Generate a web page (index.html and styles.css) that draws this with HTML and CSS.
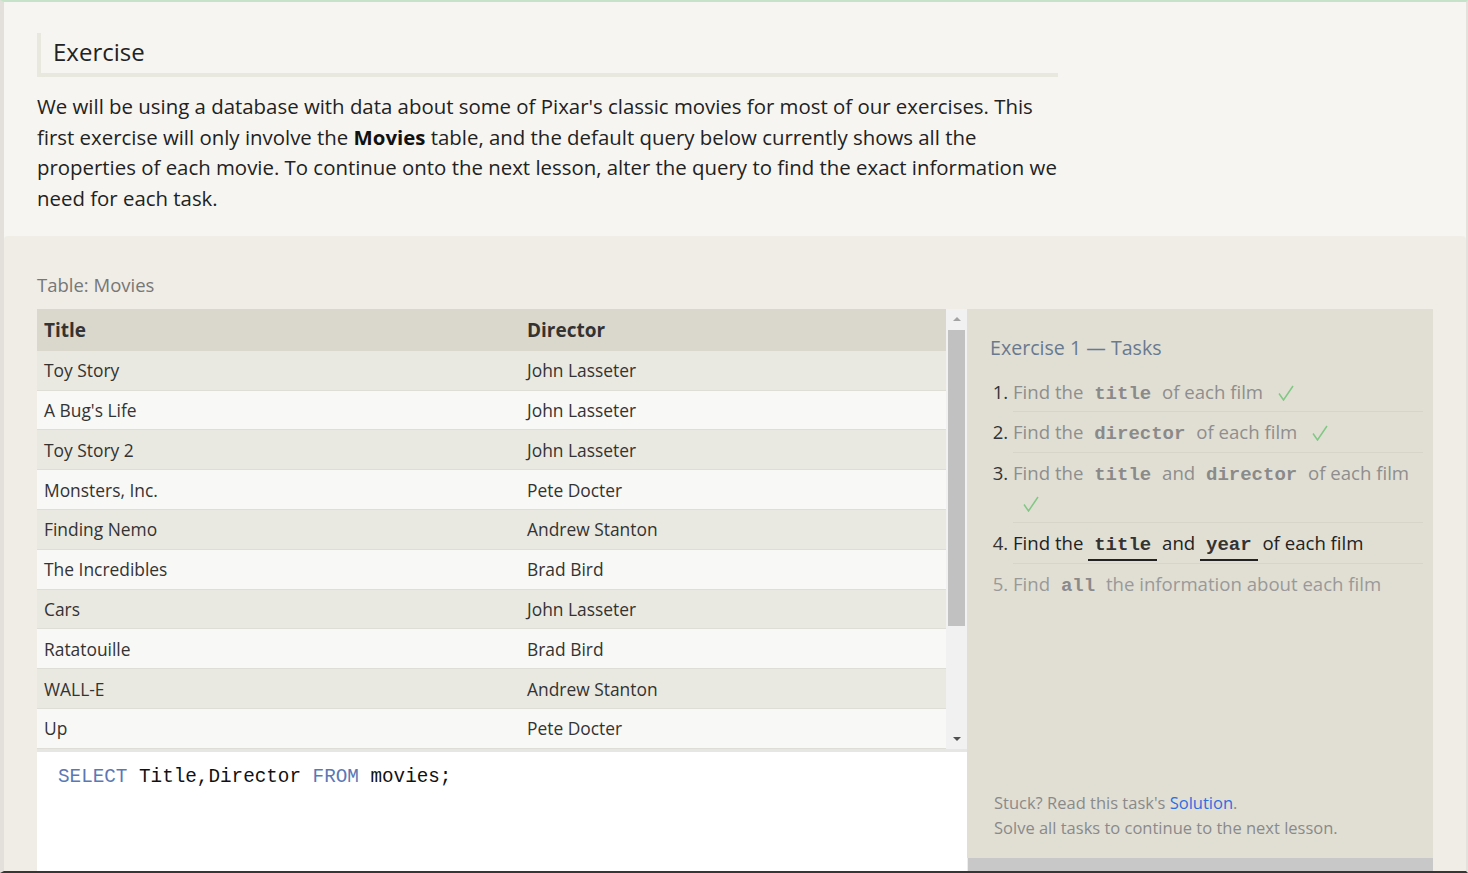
FILE: index.html
```html
<!DOCTYPE html>
<html lang="en">
<head>
<meta charset="utf-8">
<title>SQL Lesson</title>
<link rel="stylesheet" href="styles.css">
</head>
<body>
<div class="window">
  <section class="intro">
    <h1 class="intro-title">Exercise</h1>
    <p class="intro-text">We will be using a database with data about some of Pixar's classic movies for most of our exercises. This first exercise will only involve the <strong>Movies</strong> table, and the default query below currently shows all the properties of each movie. To continue onto the next lesson, alter the query to find the exact information we need for each task.</p>
  </section>
  <section class="workspace">
    <div class="table-label">Table: Movies</div>
    <div class="workspace-body">
      <div class="left-col">
        <div class="results">
          <div class="results-view">
            <table class="results-table">
              <thead>
                <tr><th class="col-title">Title</th><th>Director</th></tr>
              </thead>
              <tbody>
                <tr><td>Toy Story</td><td>John Lasseter</td></tr>
                <tr><td>A Bug's Life</td><td>John Lasseter</td></tr>
                <tr><td>Toy Story 2</td><td>John Lasseter</td></tr>
                <tr><td>Monsters, Inc.</td><td>Pete Docter</td></tr>
                <tr><td>Finding Nemo</td><td>Andrew Stanton</td></tr>
                <tr><td>The Incredibles</td><td>Brad Bird</td></tr>
                <tr><td>Cars</td><td>John Lasseter</td></tr>
                <tr><td>Ratatouille</td><td>Brad Bird</td></tr>
                <tr><td>WALL-E</td><td>Andrew Stanton</td></tr>
                <tr><td>Up</td><td>Pete Docter</td></tr>
              </tbody>
            </table>
          </div>
          <div class="scrollbar">
            <div class="sb-btn"><span class="sb-arrow sb-arrow-up"></span></div>
            <div class="sb-track"><div class="sb-thumb"></div></div>
            <div class="sb-btn"><span class="sb-arrow sb-arrow-down"></span></div>
          </div>
        </div>
        <div class="editor"><code><span class="kw">SELECT</span> Title,Director <span class="kw">FROM</span> movies;</code></div>
      </div>
      <div class="right-col">
        <div class="tasks">
          <h2 class="tasks-title">Exercise 1 — Tasks</h2>
          <ol class="task-list">
            <li class="task done">Find the <code>title</code> of each film <svg class="check" viewBox="0 0 16 16" width="16" height="16" aria-label="done"><path d="M1 8.5 L5.5 15 L15 1"/></svg></li>
            <li class="task done">Find the <code>director</code> of each film <svg class="check" viewBox="0 0 16 16" width="16" height="16" aria-label="done"><path d="M1 8.5 L5.5 15 L15 1"/></svg></li>
            <li class="task done">Find the <code>title</code> and <code>director</code> of each film <svg class="check" viewBox="0 0 16 16" width="16" height="16" aria-label="done"><path d="M1 8.5 L5.5 15 L15 1"/></svg></li>
            <li class="task active">Find the <code>title</code> and <code>year</code> of each film</li>
            <li class="task todo">Find <code>all</code> the information about each film</li>
          </ol>
          <div class="help">
            <div>Stuck? Read this task's <a href="#" class="help-link">Solution</a>.</div>
            <div>Solve all tasks to continue to the next lesson.</div>
          </div>
        </div>
        <div class="reset-bar"></div>
      </div>
    </div>
  </section>
</div>
</body>
</html>
```

FILE: styles.css
```css
html, body {
  margin: 0;
  padding: 0;
}

body {
  font-family: "Open Sans", "Noto Sans", sans-serif;
  background: #f6f5f1;
  color: #222;
}

.window {
  height: 873px;
  box-sizing: border-box;
  border-top: 2px solid #c6e2c8;
  border-left: 4px solid #e3dfdb;
  border-right: 2px solid #e4e1dc;
  border-bottom: 2px solid #363636;
  overflow: hidden;
  display: flex;
  flex-direction: column;
  background: #f6f5f1;
}

/* Intro */
.intro {
  padding: 31px 0 22px 33px;
}

.intro-title {
  margin: 0;
  width: 1021px;
  box-sizing: border-box;
  height: 44px;
  line-height: 37px;
  padding-left: 12px;
  border-left: 4px solid #e9e8df;
  border-bottom: 4px solid #e9e8df;
  font-size: 24px;
  font-weight: 400;
  color: #222;
}

.intro-text {
  margin: 14px 0 0;
  width: 1021px;
  font-size: 20.4px;
  line-height: 30.7px;
  color: #222;
}

.intro-text strong {
  font-weight: 700;
  color: #111;
}

/* Workspace */
.workspace {
  flex: 1;
  background: #efede6;
  border-radius: 4px 4px 0 0;
  padding: 36px 33px 0;
}

.table-label {
  font-size: 18.5px;
  line-height: 26px;
  color: #777;
  margin-bottom: 11px;
}

.workspace-body {
  display: flex;
}

.left-col {
  width: 930px;
  display: flex;
  flex-direction: column;
}

.results {
  display: flex;
  height: 440px;
}

.results-view {
  flex: 1;
  overflow: hidden;
}

.results-table {
  width: 100%;
  border-collapse: collapse;
  font-size: 17.4px;
  color: #333;
}

.results-table th {
  height: 42px;
  padding: 0 7px;
  background: #dad8cc;
  text-align: left;
  font-size: 19px;
  font-weight: 700;
  color: #333;
}

.results-table .col-title {
  width: 469px;
}

.results-table td {
  height: 38.8px;
  padding: 0 7px;
  border-bottom: 1px solid #deddd6;
}

.results-table tbody tr:nth-child(odd) td {
  background: #eae9e1;
}

.results-table tbody tr:nth-child(even) td {
  background: #f8f8f6;
}

/* Fake scrollbar */
.scrollbar {
  width: 21px;
  background: #f1f1f1;
  display: flex;
  flex-direction: column;
}

.sb-btn {
  height: 20px;
  display: flex;
  align-items: center;
  justify-content: center;
}

.sb-arrow {
  width: 0;
  height: 0;
  border-left: 4px solid transparent;
  border-right: 4px solid transparent;
}

.sb-arrow-up {
  border-bottom: 4px solid #a3a3a3;
}

.sb-arrow-down {
  border-top: 4px solid #505050;
}

.sb-track {
  flex: 1;
  padding: 1px 2px 0;
}

.sb-thumb {
  height: 296px;
  background: #c1c1c1;
}

/* Editor */
.editor {
  border-top: 3px solid #e6e6e3;
  background: #fff;
  height: 220px;
  padding: 12px 21px;
  font-family: "Liberation Mono", "DejaVu Sans Mono", monospace;
  font-size: 19.3px;
  line-height: 26px;
  color: #111;
}

.editor code {
  font-family: inherit;
}

.editor .kw {
  color: #5a78b5;
}

/* Tasks */
.right-col {
  width: 466px;
  display: flex;
  flex-direction: column;
}

.tasks {
  height: 549px;
  box-sizing: border-box;
  background: #e1dfd4;
  padding: 25px 10px 18px 23px;
  display: flex;
  flex-direction: column;
}

.tasks-title {
  margin: 0;
  font-size: 19.6px;
  line-height: 28px;
  font-weight: 400;
  color: #687a90;
}

.task-list {
  margin: 10px 0 0 23px;
  padding: 0;
  list-style: decimal outside;
}

.task {
  font-size: 18.6px;
  line-height: 30px;
  padding: 5px 0 4.5px;
  border-bottom: 1px solid #d7d5ca;
  color: #8e8e8e;
}

.task:last-child {
  border-bottom: none;
}

.task::marker {
  color: #333;
}

.task code {
  font-family: "Liberation Mono", "DejaVu Sans Mono", monospace;
  font-weight: 700;
  font-size: 19px;
  line-height: 1;
  padding: 0 6px;
  color: #8a8a8a;
}

.task.active {
  color: #222;
}

.task.active code {
  color: #333;
  border-bottom: 2px solid #222;
  padding-bottom: 3px;
}

.task.todo,
.task.todo::marker {
  color: #999;
}

.check {
  margin-left: 10px;
  vertical-align: -2px;
  fill: none;
  stroke: #80c884;
  stroke-width: 1.5;
}

.help {
  margin-top: auto;
  padding-left: 4px;
  font-size: 16.5px;
  line-height: 25px;
  color: #8a8a8a;
}

.help-link {
  color: #2d6ee0;
  text-decoration: none;
}

.reset-bar {
  height: 40px;
  margin-left: 1px;
  background: #c8c8c8;
}
```
